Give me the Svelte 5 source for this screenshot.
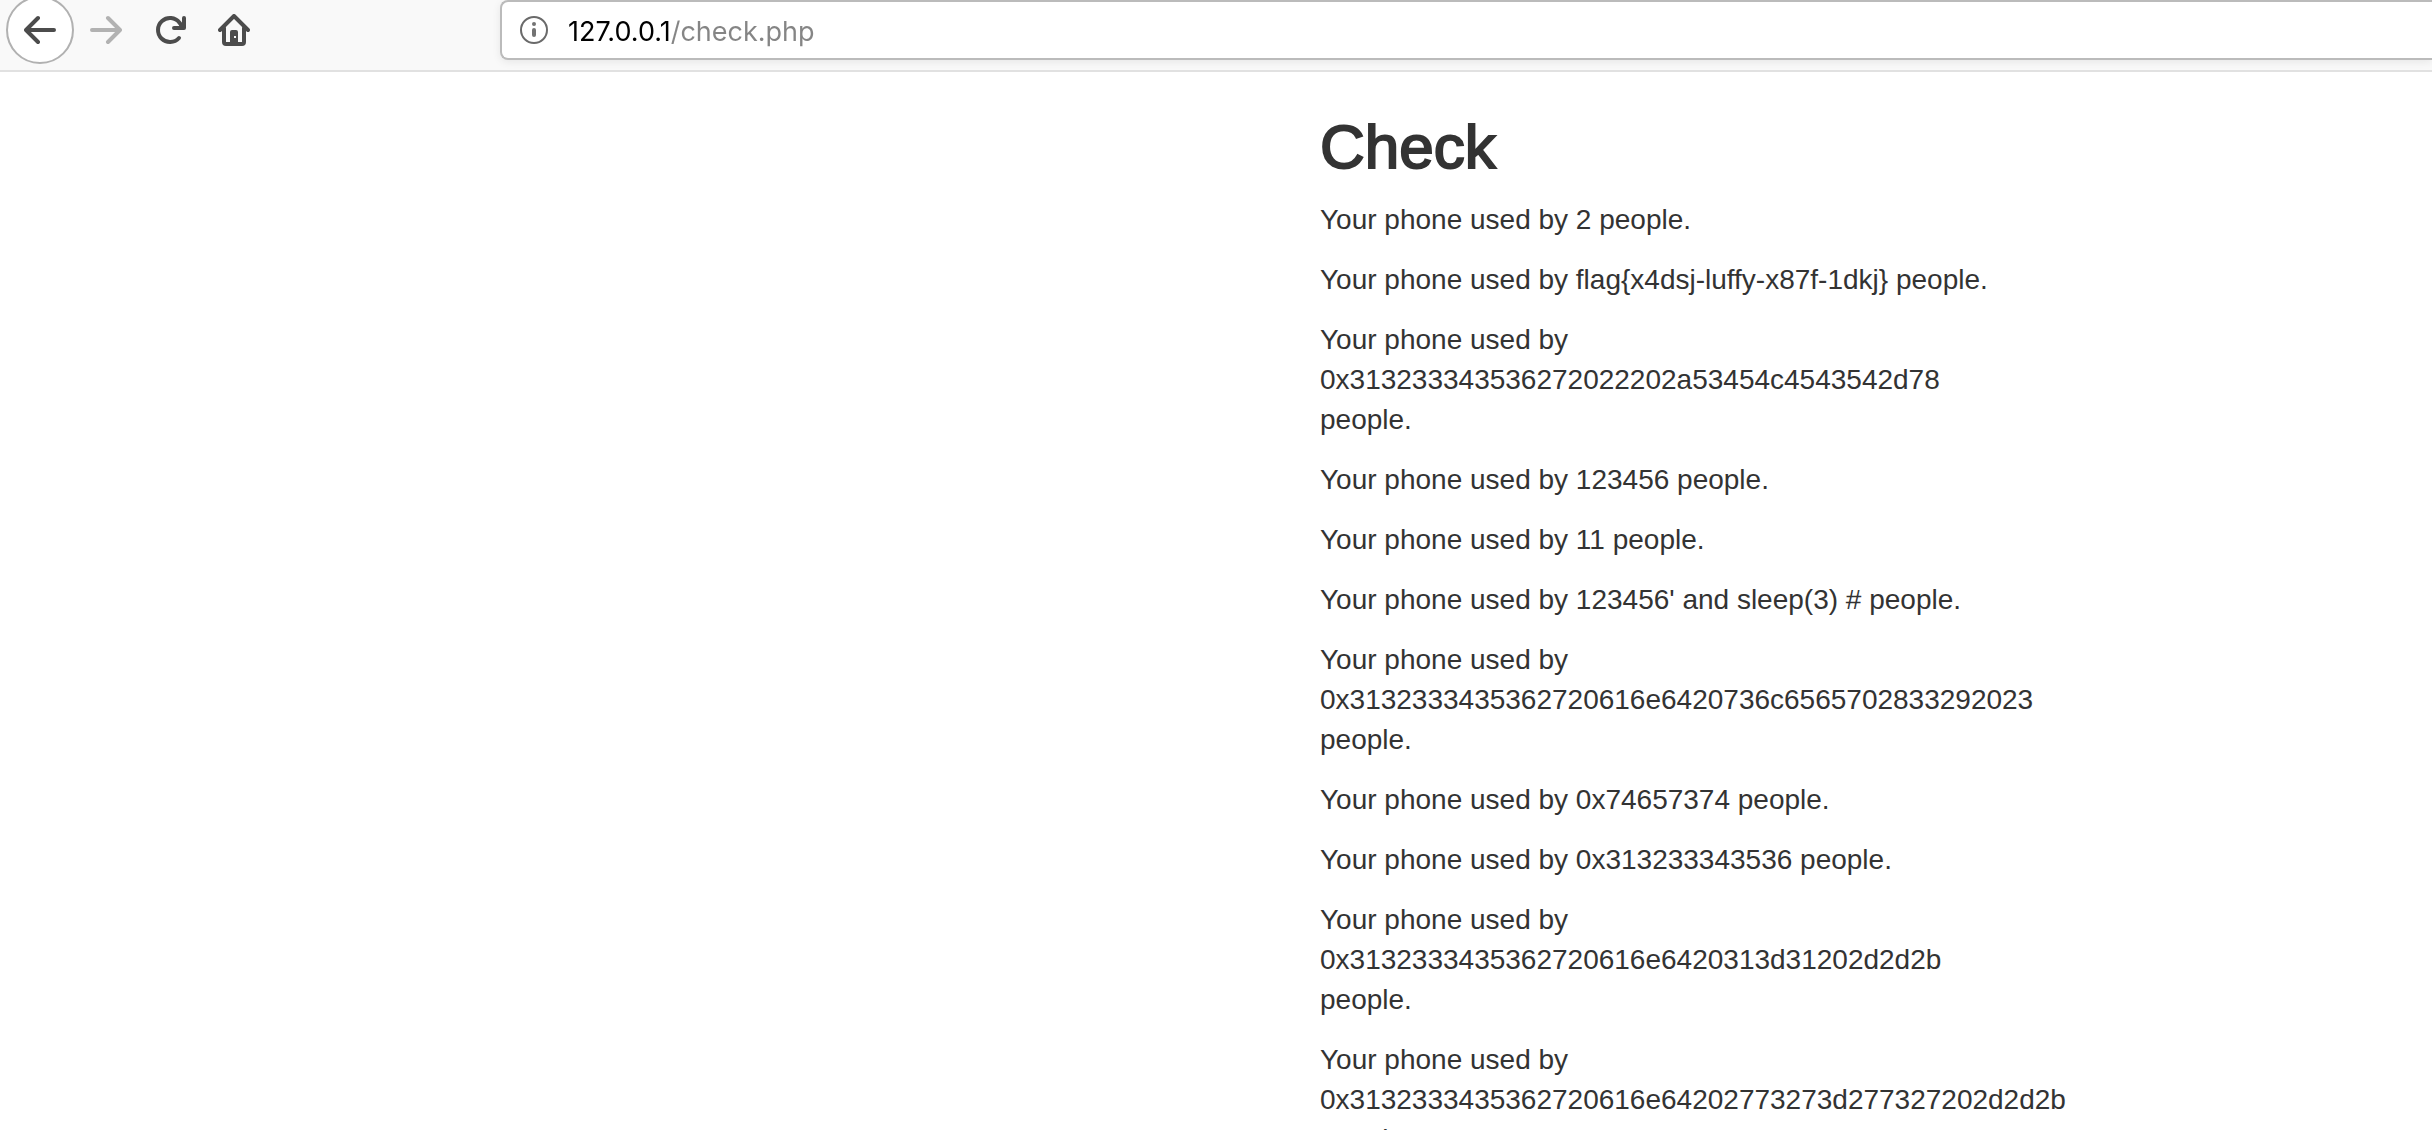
<script>
  let address = $state('127.0.0.1/check.php');

  const values = [
    '2',
    'flag{x4dsj-luffy-x87f-1dkj}',
    '0x313233343536272022202a53454c4543542d78',
    '123456',
    '11',
    "123456' and sleep(3) #",
    '0x3132333435362720616e6420736c6565702833292023',
    '0x74657374',
    '0x313233343536',
    '0x3132333435362720616e6420313d31202d2d2b',
    '0x3132333435362720616e64202773273d277327202d2d2b'
  ];
</script>

<div class="window">
  <header class="toolbar">
    <nav class="buttons" aria-label="Navigation">
      <button class="back" type="button" aria-label="Back">
        <svg viewBox="0 0 32 32"><path d="M30 16H3M14 4L2 16l12 12" /></svg>
      </button>
      <button class="forward" type="button" aria-label="Forward" disabled>
        <svg viewBox="0 0 32 32"><path d="M2 16h27M18 4l12 12-12 12" /></svg>
      </button>
      <button type="button" aria-label="Reload">
        <svg viewBox="0 0 32 32">
          <path d="M25 24A12 12 0 1 1 25.5 8.7L28 12" />
          <path d="M20 14h10V4" />
          <path class="solid" d="M24 14l2-4 4-2v6z" />
        </svg>
      </button>
      <button type="button" aria-label="Home">
        <svg viewBox="0 0 32 32">
          <path d="M2 16L16 2l14 14" />
          <path d="M6 14v14q0 2 2 2h16q2 0 2-2V14" />
          <path
            class="solid"
            fill-rule="evenodd"
            d="M12 29V18q0-2 2-2h4q2 0 2 2v11zM16 22v2h2v-2z"
          />
        </svg>
      </button>
    </nav>
    <div class="address">
      <svg viewBox="0 0 28 28" aria-hidden="true">
        <circle class="ring" cx="14" cy="14" r="13" />
        <circle cx="14" cy="8" r="2" />
        <rect x="12" y="12" width="4" height="9" rx="2" />
      </svg>
      <input type="text" aria-label="Address" bind:value={address} spellcheck="false" />
    </div>
  </header>

  <main>
    <section>
      <h2>Check</h2>
      {#each values as value}
        <p>Your phone used by {value} people.</p>
      {/each}
    </section>
  </main>
</div>

<style>
  :global(body) {
    margin: 0;
    background: #fff;
  }

  .window {
    display: flex;
    flex-direction: column;
    height: 100vh;
    overflow: hidden;
    color: #333;
    font-family: 'Liberation Sans', Arial, sans-serif;
    font-size: 28px;
    line-height: 40px;
  }

  .toolbar {
    display: flex;
    flex: none;
    align-items: center;
    gap: 234px;
    height: 60px;
    padding: 0 0 10px 6px;
    border-bottom: 2px solid #e1e1e1;
    background: #f9f9f9;
  }

  .buttons {
    display: flex;
    align-items: center;
  }

  button {
    display: flex;
    align-items: center;
    justify-content: center;
    box-sizing: border-box;
    width: 64px;
    height: 64px;
    padding: 0;
    border: 0;
    background: none;
    color: #4c4c4c;
  }

  button svg {
    width: 32px;
    height: 32px;
    fill: none;
    stroke: currentColor;
    stroke-width: 4;
    stroke-linecap: round;
    stroke-linejoin: round;
  }

  button .solid {
    fill: currentColor;
    stroke: none;
  }

  .back {
    width: 68px;
    height: 68px;
    border: 2px solid #b1b1b1;
    border-radius: 50%;
    background: #fff;
  }

  .forward {
    color: #b2b2b2;
  }

  .address {
    display: flex;
    flex: 1;
    align-items: center;
    gap: 20px;
    box-sizing: border-box;
    height: 60px;
    padding-left: 18px;
    border: 2px solid #bbb;
    border-right: 0;
    border-radius: 8px 0 0 8px;
    background: #fff;
    box-shadow: 0 2px 8px rgb(0 0 0 / 8%);
  }

  .address svg {
    flex: none;
    width: 28px;
    height: 28px;
    fill: #737373;
  }

  .address .ring {
    fill: none;
    stroke: #6a6a6a;
    stroke-width: 2;
  }

  /* The host part of the address is black, the path part grey. */
  input {
    flex: 1;
    min-width: 0;
    height: 42px;
    padding: 2px 0 0;
    border: 0;
    outline: 0;
    background: linear-gradient(90deg, #000 103px, #858585 103px);
    background-clip: text;
    -webkit-background-clip: text;
    -webkit-text-fill-color: transparent;
    caret-color: #000;
    font-family: Inter, sans-serif;
    font-size: 27px;
    line-height: 40px;
  }

  main {
    display: grid;
    grid-template-columns: 1320fr 1112fr;
    padding-top: 42px;
  }

  section {
    grid-column: 2;
    max-width: 700px;
  }

  h2 {
    margin: 0 0 20px;
    font-size: 62px;
    font-weight: 400;
    line-height: 66px;
    -webkit-text-stroke: 2px currentColor;
  }

  p {
    margin: 0 0 20px;
  }
</style>
